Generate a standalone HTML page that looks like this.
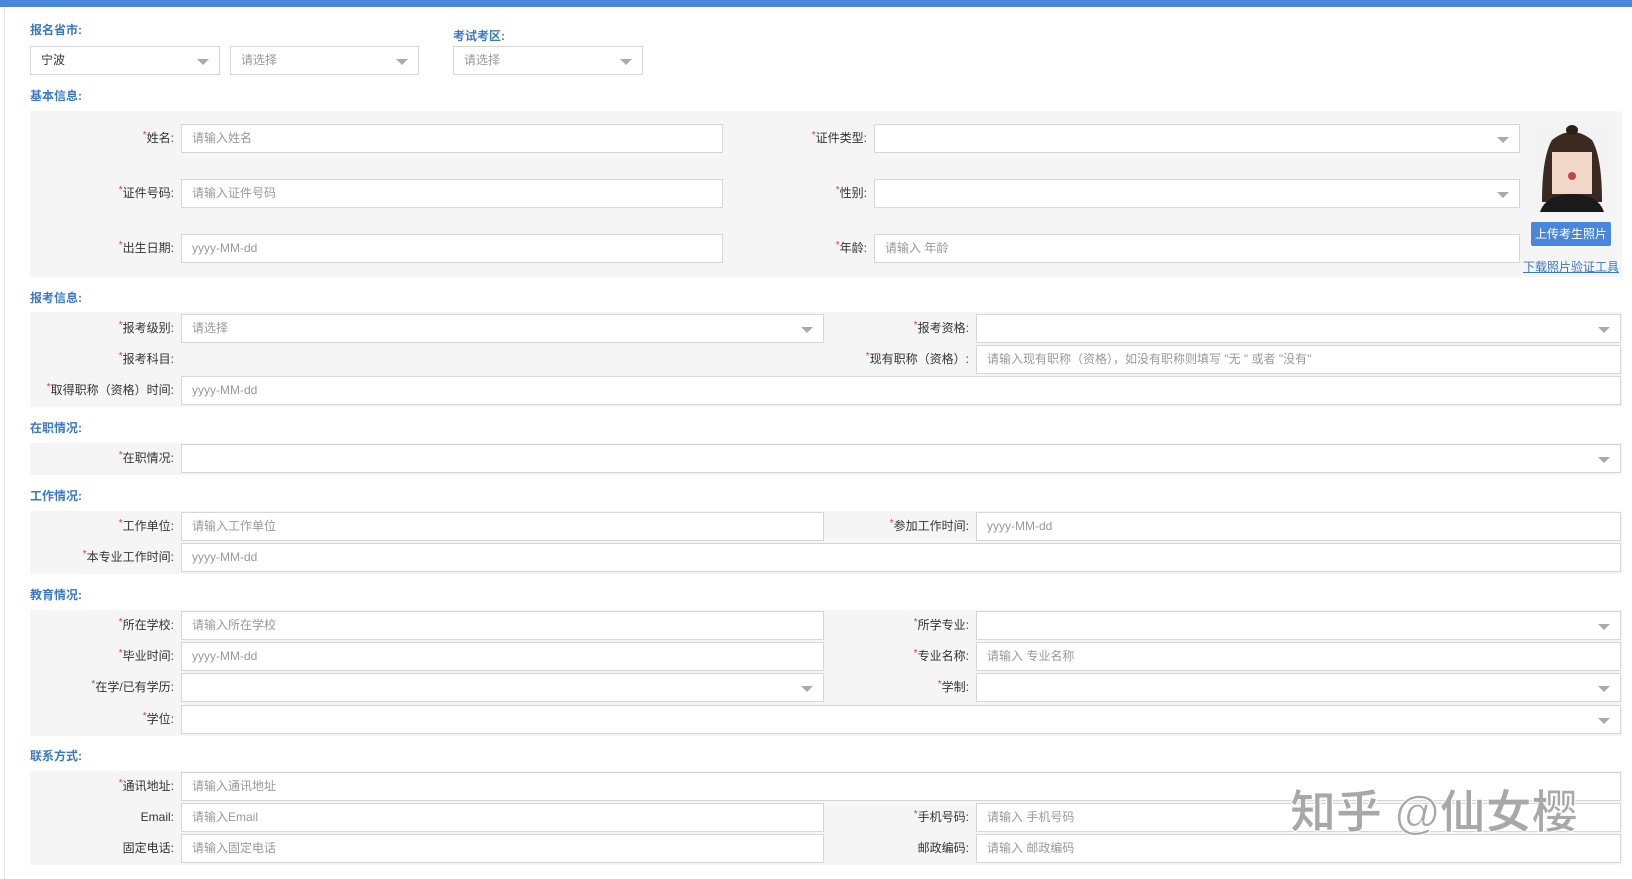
<!DOCTYPE html>
<html><head><meta charset="utf-8"><style>
*{box-sizing:border-box;margin:0;padding:0}
body{width:1632px;height:879px;background:#fff;font-family:"Liberation Sans","Noto Sans CJK SC",sans-serif;font-size:12px;color:#333;position:relative;overflow:hidden}
.a{position:absolute}
.top{left:0;top:0;width:1632px;height:7px;background:#4a86d9}
.vl{left:4px;top:7px;width:1px;height:872px;background:#e6e6e6}
.h{color:#3a78c3;font-size:12px;font-weight:bold}
.p{background:#f5f5f5}
.in{position:absolute;background:#fff;border:1px solid #d6d6d6;height:29px;line-height:27px;padding-left:10px;color:#999;font-size:12px}
.sel::after{content:"";position:absolute;right:10px;top:12px;border-left:6px solid transparent;border-right:6px solid transparent;border-top:6px solid #aaa}
.lb{position:absolute;text-align:right;height:29px;line-height:29px;color:#333;font-size:12px}
.lb i{color:#e33;font-style:normal;font-size:10px;vertical-align:top;line-height:24px}
</style></head><body>
<div class="a top"></div><div class="a vl"></div>

<div class="a h" style="left:30px;top:21px">报名省市:</div>
<div class="a h" style="left:453px;top:27px">考试考区:</div>
<div class="in sel" style="left:30px;top:46px;width:190px;color:#333">宁波</div>
<div class="in sel" style="left:230px;top:46px;width:189px">请选择</div>
<div class="in sel" style="left:453px;top:46px;width:190px">请选择</div>

<div class="a h" style="left:30px;top:87px">基本信息:</div>
<div class="a p" style="left:30px;top:111px;width:1592px;height:166px"></div>
<div class="lb" style="left:30px;width:144px;top:124px"><i>*</i>姓名:</div>
<div class="in" style="left:181px;top:124px;width:542px">请输入姓名</div>
<div class="lb" style="left:30px;width:144px;top:179px"><i>*</i>证件号码:</div>
<div class="in" style="left:181px;top:179px;width:542px">请输入证件号码</div>
<div class="lb" style="left:30px;width:144px;top:234px"><i>*</i>出生日期:</div>
<div class="in" style="left:181px;top:234px;width:542px">yyyy-MM-dd</div>
<div class="lb" style="left:740px;width:127px;top:124px"><i>*</i>证件类型:</div>
<div class="in sel" style="left:874px;top:124px;width:646px"></div>
<div class="lb" style="left:740px;width:127px;top:179px"><i>*</i>性别:</div>
<div class="in sel" style="left:874px;top:179px;width:646px"></div>
<div class="lb" style="left:740px;width:127px;top:234px"><i>*</i>年龄:</div>
<div class="in" style="left:874px;top:234px;width:646px">请输入 年龄</div>
<svg class="a" style="left:1536px;top:122px" width="72" height="90" viewBox="0 0 72 90">
<rect width="72" height="90" fill="#f3f3f3"/>
<path d="M6 80 Q6 35 16 18 Q36 2 56 18 Q66 35 66 80Z" fill="#3a2a22"/>
<ellipse cx="36" cy="8" rx="6" ry="5" fill="#2a1e18"/>
<rect x="16" y="20" width="40" height="52" fill="#f0d7c8"/>
<path d="M16 20 Q36 10 56 20 L56 30 L16 30Z" fill="#3a2a22"/>
<circle cx="36" cy="54" r="4" fill="#b94a4a"/>
<path d="M4 90 Q10 72 36 72 Q62 72 68 90Z" fill="#1a1a1a"/>
</svg>
<div class="a" style="left:1531px;top:222px;width:80px;height:24px;background:#4a86d9;color:#fff;font-size:12px;text-align:center;line-height:24px;border-radius:2px">上传考生照片</div>
<div class="a" style="left:1523px;top:258px;color:#3a78c3;text-decoration:underline;font-size:12px">下载照片验证工具</div>

<div class="a h" style="left:30px;top:289px">报考信息:</div>
<div class="a p" style="left:30px;top:312px;width:1592px;height:95px"></div>
<div class="lb" style="left:30px;width:144px;top:314px"><i>*</i>报考级别:</div>
<div class="in sel" style="left:181px;top:314px;width:643px">请选择</div>
<div class="lb" style="left:830px;width:139px;top:314px"><i>*</i>报考资格:</div>
<div class="in sel" style="left:976px;top:314px;width:645px"></div>
<div class="lb" style="left:30px;width:144px;top:345px"><i>*</i>报考科目:</div>
<div class="lb" style="left:830px;width:139px;top:345px"><i>*</i>现有职称（资格）:</div>
<div class="in" style="left:976px;top:345px;width:645px">请输入现有职称（资格），如没有职称则填写 "无 " 或者 "没有"</div>
<div class="lb" style="left:30px;width:144px;top:376px"><i>*</i>取得职称（资格）时间:</div>
<div class="in" style="left:181px;top:376px;width:1440px">yyyy-MM-dd</div>

<div class="a h" style="left:30px;top:419px">在职情况:</div>
<div class="a p" style="left:30px;top:443px;width:1592px;height:32px"></div>
<div class="lb" style="left:30px;width:144px;top:444px"><i>*</i>在职情况:</div>
<div class="in sel" style="left:181px;top:444px;width:1440px"></div>

<div class="a h" style="left:30px;top:487px">工作情况:</div>
<div class="a p" style="left:30px;top:511px;width:1592px;height:63px"></div>
<div class="lb" style="left:30px;width:144px;top:512px"><i>*</i>工作单位:</div>
<div class="in" style="left:181px;top:512px;width:643px">请输入工作单位</div>
<div class="lb" style="left:830px;width:139px;top:512px"><i>*</i>参加工作时间:</div>
<div class="in" style="left:976px;top:512px;width:645px">yyyy-MM-dd</div>
<div class="lb" style="left:30px;width:144px;top:543px"><i>*</i>本专业工作时间:</div>
<div class="in" style="left:181px;top:543px;width:1440px">yyyy-MM-dd</div>

<div class="a h" style="left:30px;top:586px">教育情况:</div>
<div class="a p" style="left:30px;top:610px;width:1592px;height:126px"></div>
<div class="lb" style="left:30px;width:144px;top:611px"><i>*</i>所在学校:</div>
<div class="in" style="left:181px;top:611px;width:643px">请输入所在学校</div>
<div class="lb" style="left:830px;width:139px;top:611px"><i>*</i>所学专业:</div>
<div class="in sel" style="left:976px;top:611px;width:645px"></div>
<div class="lb" style="left:30px;width:144px;top:642px"><i>*</i>毕业时间:</div>
<div class="in" style="left:181px;top:642px;width:643px">yyyy-MM-dd</div>
<div class="lb" style="left:830px;width:139px;top:642px"><i>*</i>专业名称:</div>
<div class="in" style="left:976px;top:642px;width:645px">请输入 专业名称</div>
<div class="lb" style="left:30px;width:144px;top:673px"><i>*</i>在学/已有学历:</div>
<div class="in sel" style="left:181px;top:673px;width:643px"></div>
<div class="lb" style="left:830px;width:139px;top:673px"><i>*</i>学制:</div>
<div class="in sel" style="left:976px;top:673px;width:645px"></div>
<div class="lb" style="left:30px;width:144px;top:705px"><i>*</i>学位:</div>
<div class="in sel" style="left:181px;top:705px;width:1440px"></div>

<div class="a h" style="left:30px;top:747px">联系方式:</div>
<div class="a p" style="left:30px;top:771px;width:1592px;height:94px"></div>
<div class="lb" style="left:30px;width:144px;top:772px"><i>*</i>通讯地址:</div>
<div class="in" style="left:181px;top:772px;width:1440px">请输入通讯地址</div>
<div class="lb" style="left:30px;width:144px;top:803px">Email:</div>
<div class="in" style="left:181px;top:803px;width:643px">请输入Email</div>
<div class="lb" style="left:830px;width:139px;top:803px"><i>*</i>手机号码:</div>
<div class="in" style="left:976px;top:803px;width:645px">请输入 手机号码</div>
<div class="lb" style="left:30px;width:144px;top:834px">固定电话:</div>
<div class="in" style="left:181px;top:834px;width:643px">请输入固定电话</div>
<div class="lb" style="left:830px;width:139px;top:834px">邮政编码:</div>
<div class="in" style="left:976px;top:834px;width:645px">请输入 邮政编码</div>

<div class="a" style="left:1290px;top:786px;font-size:46px;font-weight:bold;color:#a8a8a8;white-space:nowrap;line-height:52px;-webkit-text-stroke:1px #fff">知乎 @仙女樱</div>
</body></html>
